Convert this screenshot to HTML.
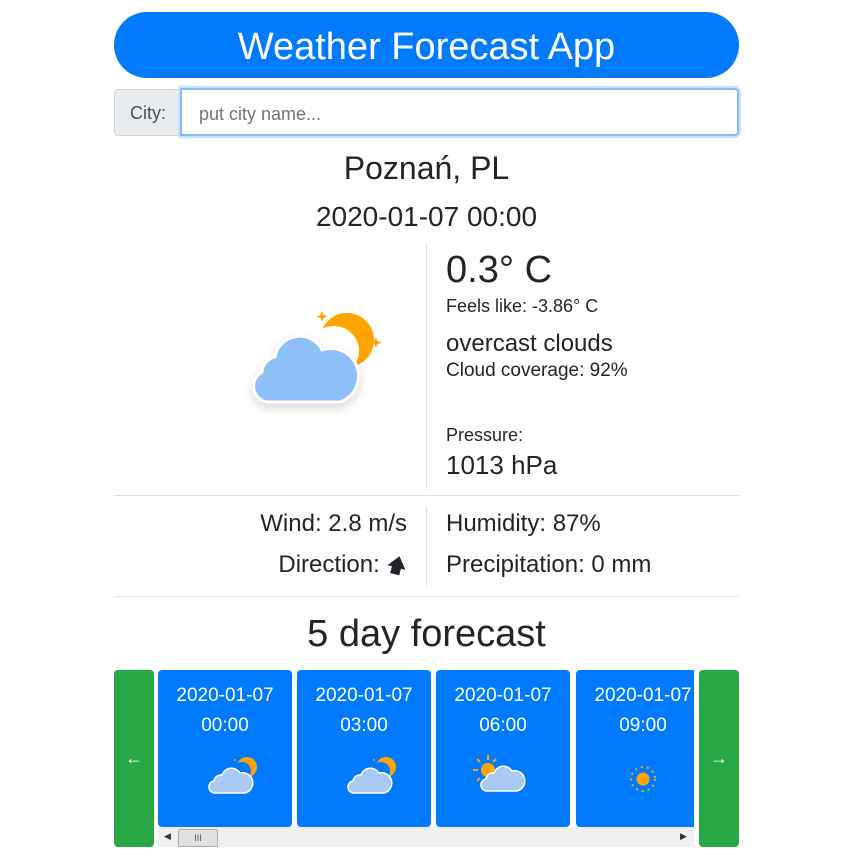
<!DOCTYPE html>
<html><head><meta charset="utf-8"><style>
body{margin:0;background:#fff;font-family:"Liberation Sans",sans-serif;color:#212529;width:854px;height:854px;overflow:hidden;position:relative}
.a{position:absolute;white-space:nowrap}
.title{left:114px;top:12px;width:625px;height:66px;background:#007bff;border-radius:33px;color:#fff;font-size:38px;text-align:center;line-height:70px}
.lbl{left:114px;top:89px;width:66px;height:45px;background:#e9ecef;border:1px solid #ced4da;border-radius:4px 0 0 4px;font-size:18px;line-height:47px;text-align:center;color:#495057}
.inp{left:180px;top:88px;height:44px;border:2px solid #80bdff;border-radius:0 4px 4px 0;box-shadow:0 0 0 2px #c9e1fb;font-size:18px;line-height:48px;padding-left:17px;width:538px;color:#6c757d}
.c{text-align:center}
.hr{height:1px;background:#dee2e6;left:114px;width:625px}
.vr{width:1px;background:#dee2e6;left:426px}
.card{top:0;width:134px;height:157px;background:#007bff;border-radius:4px;color:#fff;font-size:19px;text-align:center;line-height:30px;padding-top:11px;box-sizing:border-box}
.btn{top:670px;width:40px;height:177px;background:#28a745;border-radius:4px;color:#fff;font-size:18px;text-align:center;line-height:177px}
</style></head><body>
<div class="a title">Weather Forecast App</div>
<div class="a lbl">City:</div>
<div class="a inp">put city name...</div>
<div class="a c" style="left:114px;width:625px;top:150px;font-size:32px">Poznań, PL</div>
<div class="a c" style="left:114px;width:625px;top:201px;font-size:28px">2020-01-07 00:00</div>
<div class="a vr" style="top:244px;height:245px"></div>
<svg class="a" style="left:240px;top:300px" width="150" height="115" viewBox="240 300 150 115">
<defs><filter id="sh" x="-30%" y="-30%" width="160%" height="180%"><feDropShadow dx="0" dy="5" stdDeviation="5" flood-opacity="0.15"/></filter>
<mask id="mm" maskUnits="userSpaceOnUse" x="240" y="300" width="150" height="115"><rect x="240" y="300" width="150" height="115" fill="#fff"/><circle cx="334" cy="351" r="25" fill="#000"/></mask></defs>
<path d="M322 311 l1.5 4 4 1.5 -4 1.5 -1.5 4 -1.5 -4 -4 -1.5 4 -1.5z M376 337 l1.5 4 4 1.5 -4 1.5 -1.5 4 -1.5 -4 -4 -1.5 4 -1.5z" fill="#ffa500"/>
<circle cx="347" cy="340" r="27" fill="#ffa500" mask="url(#mm)"/>
<g filter="url(#sh)"><path d="M268 402 A16 16 0 0 1 262 372 A16 16 0 0 1 275 357 A25 25 0 0 1 322 350 A23 23 0 0 1 340 402 Z" fill="#8fbff7" stroke="#fff" stroke-width="3"/></g>
</svg>
<div class="a" style="left:446px;top:249px;font-size:38px">0.3° C</div>
<div class="a" style="left:446px;top:296px;font-size:18px">Feels like: -3.86° C</div>
<div class="a" style="left:446px;top:330px;font-size:24px">overcast clouds</div>
<div class="a" style="left:446px;top:360px;font-size:19px">Cloud coverage: 92%</div>
<div class="a" style="left:446px;top:425px;font-size:18px">Pressure:</div>
<div class="a" style="left:446px;top:450px;font-size:26px">1013 hPa</div>
<div class="a hr" style="top:495px"></div>
<div class="a vr" style="top:506px;height:80px"></div>
<div class="a" style="right:447px;top:510px;font-size:24px">Wind: 2.8 m/s</div>
<div class="a" style="right:447px;top:551px;font-size:24px">Direction: <span style="display:inline-block;transform:rotate(15deg);font-size:20px">🡅</span></div>
<div class="a" style="left:446px;top:510px;font-size:24px">Humidity: 87%</div>
<div class="a" style="left:446px;top:551px;font-size:24px">Precipitation: 0 mm</div>
<div class="a hr" style="top:596px"></div>
<div class="a c" style="left:114px;width:625px;top:613px;font-size:38px">5 day forecast</div>
<div class="a btn" style="left:114px">←</div>
<div class="a btn" style="left:699px">→</div>
<div class="a" style="left:158px;top:670px;width:536px;height:177px;overflow:hidden">
<div class="a card" style="left:0">2020-01-07<br>00:00</div>
<div class="a card" style="left:139px">2020-01-07<br>03:00</div>
<div class="a card" style="left:278px">2020-01-07<br>06:00</div>
<div class="a card" style="left:418px">2020-01-07<br>09:00</div>
<div class="a" style="left:0;top:157px;width:536px;height:20px;background:#f0f0f0"></div>
<div class="a" style="left:20px;top:159px;width:38px;height:16px;background:#e0e0e0;border:1px solid #aaa;border-radius:2px;font-size:9px;text-align:center;line-height:16px;color:#555">III</div>
<div class="a" style="left:6px;top:161px;font-size:9px;color:#333">◀</div>
<div class="a" style="left:522px;top:161px;font-size:9px;color:#333">▶</div>
</div>
<svg class="a" style="left:0;top:0" width="854" height="854" viewBox="0 0 854 854">
<defs><mask id="sm" maskUnits="userSpaceOnUse" x="-40" y="-20" width="80" height="80"><rect x="-40" y="-20" width="80" height="80" fill="#fff"/><circle cx="8" cy="12" r="9" fill="#000"/></mask>
<g id="cm">
<circle cx="13" cy="8" r="10" fill="#ffa500" mask="url(#sm)"/>
<circle cx="1" cy="1" r="1" fill="#ffa500"/><circle cx="20" cy="12" r="1" fill="#ffa500"/>
<path d="M-18 34 A6 6 0 0 1 -20 22 A7 7 0 0 1 -12 16 A10 10 0 0 1 6 14 A9 9 0 0 1 11 34Z" fill="#a9c9f6" stroke="#fff" stroke-width="1.5"/>
</g></defs>
<use href="#cm" x="234" y="759"/>
<use href="#cm" x="373" y="759"/>
<g stroke="#ffa500" stroke-width="2"><path d="M488 755v5M488 781v5M473 770h5M498 770h5M477 759l3 3M496 759l-3 3M477 781l3-3"/></g>
<circle cx="488" cy="770" r="7" fill="#ffa500"/>
<path d="M484 791 A6 6 0 0 1 482 779 A7 7 0 0 1 490 773 A10 10 0 0 1 508 771 A9 9 0 0 1 513 791Z" transform="translate(4,0)" fill="#a9c9f6" stroke="#fff" stroke-width="1.5"/>
<g stroke="#ffa500" stroke-width="2" stroke-dasharray="2 4"><circle cx="643" cy="779" r="12" fill="none"/></g>
<circle cx="643" cy="779" r="6.5" fill="#ffa500"/>
</svg>
</body></html>
